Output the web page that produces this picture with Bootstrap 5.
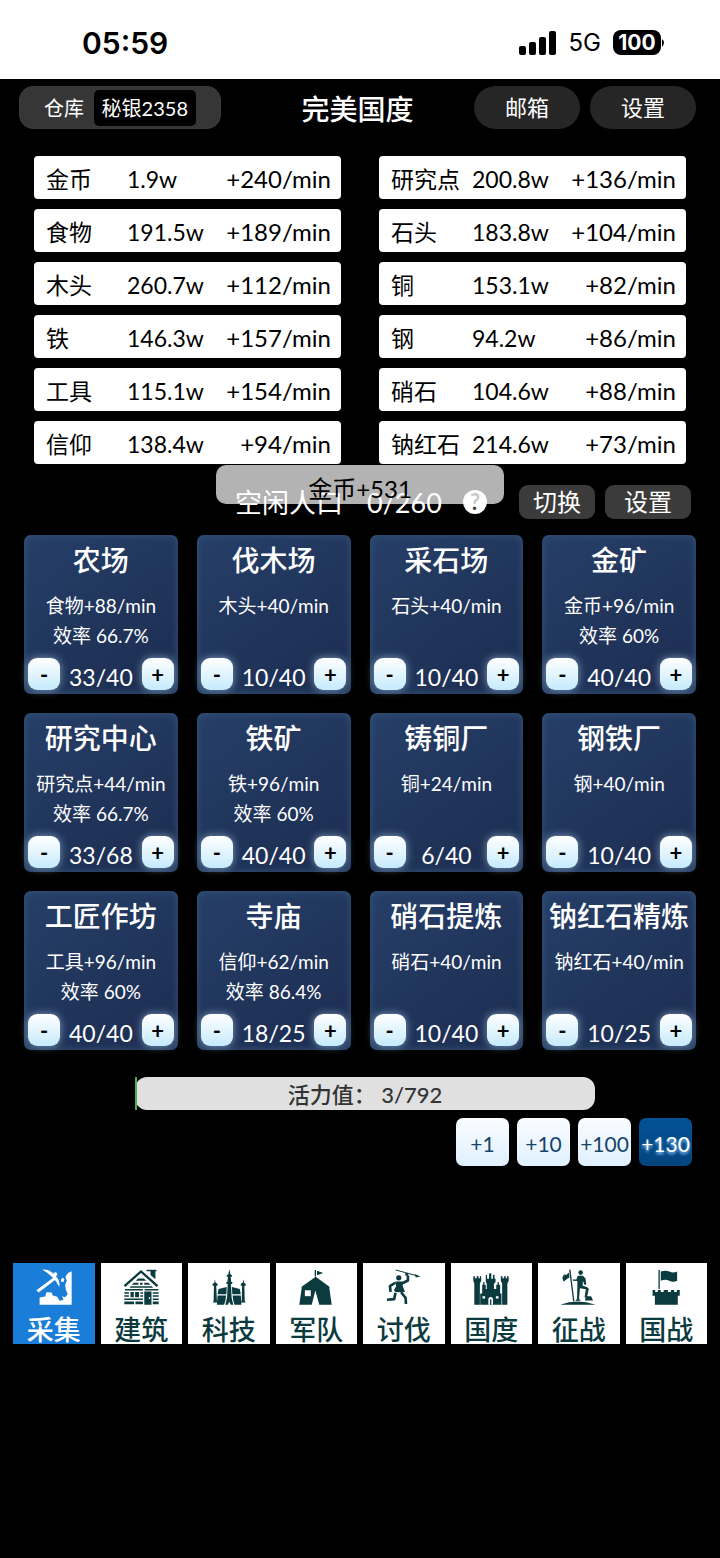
<!DOCTYPE html>
<html lang="zh-CN">
<head>
<meta charset="utf-8">
<meta name="viewport" content="width=device-width, initial-scale=1">
<title>完美国度</title>
<link href="https://cdn.jsdelivr.net/npm/bootstrap@5.3.0/dist/css/bootstrap.min.css" rel="stylesheet">
<style>
  body { background: #000; color: #fff; font-family: Lato, "Noto Sans CJK SC", sans-serif; font-size: 24px; line-height: 28px; }
  button { color: inherit; white-space: nowrap; }
  .status-bar { height: 79px; padding: 6px 54px 0 82px; font-family: Inter, sans-serif; }
  .clock { font-size: 30px; font-weight: 600; }
  .network { font-size: 24px; }
  .battery { background: #000; color: #fff; font-size: 21px; font-weight: 700; line-height: 25px; width: 48px; border-radius: 8px; text-align: center; }

  .top-bar { padding: 5px 24px 0 19px; display: grid; grid-template-columns: 1fr auto 1fr; align-items: center; }
  .store-pill { width: 202px; height: 43px; border: 1px solid #3c3c3c; border-radius: 14px; background: #363636; font-size: 20px; padding: 0 24px; }
  .store-pill span + span { background: #000; border-radius: 5px; line-height: 36px; padding: 0 8px; }
  .page-title { font-size: 28px; font-weight: 500; line-height: 43px; margin: 0; padding-top: 4px; }
  .round-pill { width: 106px; height: 43px; border: 0; border-radius: 22px; background: #262626; font-size: 22px; padding-top: 2px; }

  .resources { padding: 25px 34px 0; display: grid; grid-template-columns: 1fr 1fr; gap: 10px 38px; }
  .resource { background: #fff; color: #000; border-radius: 4px; height: 43px; padding: 3px 10px 0 12px; }
  .resource-name { width: 81px; font-size: 23px; }
  .resource-amount { font-size: 23px; }

  .idle-row { padding: 5px 29px 0 235px; height: 71px; }
  .idle-count { font-size: 27px; line-height: 50px; padding-top: 2px; }
  .help-btn { width: 24px; height: 24px; border: 0; border-radius: 12px; background: #fff; color: #444; font-size: 22px; font-weight: 700; line-height: 24px; padding: 0; }
  .dark-btn { height: 34px; border: 0; border-radius: 9px; background: #3b3b3b; font-size: 24px; line-height: 34px; padding: 0 14px; }
  .dark-btn.wide { padding: 0 19px; }
  .gain-toast { top: 1px; left: 30%; right: 30%; height: 39px; border-radius: 10px; background: rgba(255,255,255,.7); color: #000; line-height: 48px; text-align: center; }

  .buildings { padding: 0 24px; display: grid; grid-template-columns: repeat(4, 1fr); gap: 19px; }
  .building { height: 159px; border-radius: 7px; padding: 11px 4px 2px; background: linear-gradient(145deg, #263f68, #1c2c50); box-shadow: inset 0 0 8px #355679; text-align: center; white-space: nowrap; }
  .building h2 { font-size: 28px; font-weight: 500; line-height: 28px; margin: 0 -4px; }
  .building p { font-size: 19px; line-height: 30px; margin: 0; }
  .building h2 + p { margin-top: 17px; }
  .step-btn { width: 32px; height: 32px; border: 0; border-radius: 9px; background: linear-gradient(#fff, #c5eafc); box-shadow: 0 0 8px rgba(190,225,255,.6); color: #000; font-size: 22px; font-weight: 700; line-height: 34px; padding: 0; }
  .workers { font-size: 23px; line-height: 30px; padding-top: 4px; }

  .vigor { height: 33px; margin: 27px 125px 0 135px; border-radius: 12px; background: #e0e0e0; color: #333; font-weight: 500; font-size: 22px; line-height: 36px; overflow: visible; }
  .vigor-bar { background: #4caf50; }
  .steps { gap: 8px; padding: 8px 28px 0; }
  .amount-btn { width: 53px; height: 48px; border: 0; border-radius: 7px; background: linear-gradient(#fafcff, #e0f0ff); color: #164468; font-size: 21px; padding: 3px 0 0; }
  .amount-btn.chosen { background: linear-gradient(#035296, #04457e); color: #fff; text-shadow: 0 2px 3px #9cf; }

  .tabs { margin-top: 97px; padding: 0 13px; gap: 6px; }
  .tab { flex: 1 1 0; min-width: 0; height: 81px; border: 0; background: #fff; color: #0b3b3e; padding: 5px 0 0; font-size: 27px; font-weight: 500; line-height: 28px; }
  .tab svg { display: block; width: 36px; height: 36px; margin: 0 auto 11px; fill: currentColor; stroke: currentColor; stroke-width: 0; }
  .tab.current { background: #1a7dd7; color: #fff; }
</style>
<script src="https://cdn.jsdelivr.net/npm/bootstrap@5.3.0/dist/js/bootstrap.bundle.min.js"></script>
</head>
<body>
<div class="status-bar bg-white text-black d-flex align-items-center justify-content-between">
  <span class="clock">05:59</span>
  <div class="d-flex align-items-center">
    <svg class="me-2" width="38" height="26" viewBox="0 0 38 26" aria-hidden="true"><rect y="16" width="7" height="9" rx="2"/><rect x="10" y="12" width="7" height="13" rx="2"/><rect x="20" y="7" width="7" height="18" rx="2"/><rect x="30" y="1" width="7" height="24" rx="2"/></svg>
    <span class="network ms-1 me-2">5G</span>
    <span class="battery ms-1">100</span>
    <svg width="5" height="12" viewBox="0 0 5 12" aria-hidden="true"><path d="M1 2q4 3 0 8z"/></svg>
  </div>
</div>

<header class="top-bar">
  <button class="store-pill d-flex align-items-center justify-content-between"><span>仓库</span><span>秘银2358</span></button>
  <h1 class="page-title">完美国度</h1>
  <div class="d-flex justify-content-end" style="gap:10px"><button class="round-pill">邮箱</button><button class="round-pill">设置</button></div>
</header>

<main>
  <section class="resources">
    <div class="resource d-flex align-items-center"><span class="resource-name">金币</span><span class="resource-amount">1.9w</span><span class="ms-auto">+240/min</span></div>
    <div class="resource d-flex align-items-center"><span class="resource-name">研究点</span><span class="resource-amount">200.8w</span><span class="ms-auto">+136/min</span></div>
    <div class="resource d-flex align-items-center"><span class="resource-name">食物</span><span class="resource-amount">191.5w</span><span class="ms-auto">+189/min</span></div>
    <div class="resource d-flex align-items-center"><span class="resource-name">石头</span><span class="resource-amount">183.8w</span><span class="ms-auto">+104/min</span></div>
    <div class="resource d-flex align-items-center"><span class="resource-name">木头</span><span class="resource-amount">260.7w</span><span class="ms-auto">+112/min</span></div>
    <div class="resource d-flex align-items-center"><span class="resource-name">铜</span><span class="resource-amount">153.1w</span><span class="ms-auto">+82/min</span></div>
    <div class="resource d-flex align-items-center"><span class="resource-name">铁</span><span class="resource-amount">146.3w</span><span class="ms-auto">+157/min</span></div>
    <div class="resource d-flex align-items-center"><span class="resource-name">钢</span><span class="resource-amount">94.2w</span><span class="ms-auto">+86/min</span></div>
    <div class="resource d-flex align-items-center"><span class="resource-name">工具</span><span class="resource-amount">115.1w</span><span class="ms-auto">+154/min</span></div>
    <div class="resource d-flex align-items-center"><span class="resource-name">硝石</span><span class="resource-amount">104.6w</span><span class="ms-auto">+88/min</span></div>
    <div class="resource d-flex align-items-center"><span class="resource-name">信仰</span><span class="resource-amount">138.4w</span><span class="ms-auto">+94/min</span></div>
    <div class="resource d-flex align-items-center"><span class="resource-name">钠红石</span><span class="resource-amount">214.6w</span><span class="ms-auto">+73/min</span></div>
  </section>

  <section class="idle-row position-relative d-flex align-items-center">
    <span class="idle-count">空闲人口</span>
    <span class="idle-count ms-4">0/260</span>
    <button class="help-btn ms-auto me-4">?</button>
    <div class="d-flex ms-2" style="gap:10px"><button class="dark-btn">切换</button><button class="dark-btn wide">设置</button></div>
    <div class="gain-toast position-absolute" role="status">金币+531</div>
  </section>

  <section class="buildings">
    <article class="building d-flex flex-column"><h2>农场</h2><p>食物+88/min</p><p>效率 66.7%</p><div class="d-flex justify-content-between mt-auto"><button class="step-btn">-</button><span class="workers">33/40</span><button class="step-btn">+</button></div></article>
    <article class="building d-flex flex-column"><h2>伐木场</h2><p>木头+40/min</p><div class="d-flex justify-content-between mt-auto"><button class="step-btn">-</button><span class="workers">10/40</span><button class="step-btn">+</button></div></article>
    <article class="building d-flex flex-column"><h2>采石场</h2><p>石头+40/min</p><div class="d-flex justify-content-between mt-auto"><button class="step-btn">-</button><span class="workers">10/40</span><button class="step-btn">+</button></div></article>
    <article class="building d-flex flex-column"><h2>金矿</h2><p>金币+96/min</p><p>效率 60%</p><div class="d-flex justify-content-between mt-auto"><button class="step-btn">-</button><span class="workers">40/40</span><button class="step-btn">+</button></div></article>
    <article class="building d-flex flex-column"><h2>研究中心</h2><p>研究点+44/min</p><p>效率 66.7%</p><div class="d-flex justify-content-between mt-auto"><button class="step-btn">-</button><span class="workers">33/68</span><button class="step-btn">+</button></div></article>
    <article class="building d-flex flex-column"><h2>铁矿</h2><p>铁+96/min</p><p>效率 60%</p><div class="d-flex justify-content-between mt-auto"><button class="step-btn">-</button><span class="workers">40/40</span><button class="step-btn">+</button></div></article>
    <article class="building d-flex flex-column"><h2>铸铜厂</h2><p>铜+24/min</p><div class="d-flex justify-content-between mt-auto"><button class="step-btn">-</button><span class="workers">6/40</span><button class="step-btn">+</button></div></article>
    <article class="building d-flex flex-column"><h2>钢铁厂</h2><p>钢+40/min</p><div class="d-flex justify-content-between mt-auto"><button class="step-btn">-</button><span class="workers">10/40</span><button class="step-btn">+</button></div></article>
    <article class="building d-flex flex-column"><h2>工匠作坊</h2><p>工具+96/min</p><p>效率 60%</p><div class="d-flex justify-content-between mt-auto"><button class="step-btn">-</button><span class="workers">40/40</span><button class="step-btn">+</button></div></article>
    <article class="building d-flex flex-column"><h2>寺庙</h2><p>信仰+62/min</p><p>效率 86.4%</p><div class="d-flex justify-content-between mt-auto"><button class="step-btn">-</button><span class="workers">18/25</span><button class="step-btn">+</button></div></article>
    <article class="building d-flex flex-column"><h2>硝石提炼</h2><p>硝石+40/min</p><div class="d-flex justify-content-between mt-auto"><button class="step-btn">-</button><span class="workers">10/40</span><button class="step-btn">+</button></div></article>
    <article class="building d-flex flex-column"><h2>钠红石精炼</h2><p>钠红石+40/min</p><div class="d-flex justify-content-between mt-auto"><button class="step-btn">-</button><span class="workers">10/25</span><button class="step-btn">+</button></div></article>
  </section>

  <div class="vigor progress position-relative" role="progressbar" aria-label="活力值" aria-valuenow="3" aria-valuemin="0" aria-valuemax="792">
    <div class="vigor-bar" style="width:0.38%"></div>
    <div class="position-absolute w-100 text-center">活力值： 3/792</div>
  </div>
  <div class="steps d-flex justify-content-end">
    <button class="amount-btn">+1</button><button class="amount-btn">+10</button><button class="amount-btn">+100</button><button class="amount-btn chosen">+130</button>
  </div>
</main>

<nav class="tabs d-flex">
  <button class="tab current"><svg viewBox="92 38 110 110" aria-hidden="true"><path d="M111 40Q134 38 148 55L158 66Q166 78 163 92Q153 73 142 63Q128 49 111 40zM151 60l6 6-57 44-7-7zM201 45v102h-98v-22l17-3 4-13 16 1 3 9 14 4 7 12 12-2-4-12 9 3 8-9-6-14-2-14 5-13-4-12 8-12z"/><circle cx="151" cy="54" r="6"/><path d="M168 70l6-5 5 4-3 9-7-1z"/></svg>采集</button>
  <button class="tab"><svg viewBox="354 38 110 110" aria-hidden="true"><path d="M409 41l53 47-5 5-48-43-48 43-5-5zM426 40h30v5h-3v24l-15-13v-11h-12zM400 67h18l7 7h-32zM387 80h14v6h-20zM406 80h8v6h-8zM419 80h12l7 6h-19zM378 91h64l4 4h-72zM360 99h55v5h-55zM420 99h42v5h-42zM358 109h14v5h-14zM358 118h14v5h-14zM377 108h10v16h-10zM391 108h12v16h-12zM407 109h8v5h-8zM407 118h8v5h-8zM445 109h18v5h-18zM445 118h18v5h-18zM358 128h57v5h-57zM445 128h18v5h-18zM358 137h30v9h-30zM392 137h23v9h-23zM445 137h18v9h-18z"/><path fill-rule="evenodd" d="M419 107h22v40h-22zm14 17v6h4v-6z"/></svg>建筑</button>
  <button class="tab"><svg viewBox="92 38 110 110" aria-hidden="true"><path d="M145 54l3-16 3 16 5 3v5h-4l2 16h3v6h-4l2 42 5 21h-8q-4-17-8 0h-8l5-21 2-42h-4v-6h3l2-16h-4v-5zM102 80l2-11 2 11 6 3v6h-4l2 46 3 5h-15l2-5 1-46h-4v-6zM189 80l2-11 2 11 5 3v6h-4l1 46 3 5h-15l3-5 1-46h-4v-6zM115 99l25-6-1 22h-27zM156 93l24 6 3 16h-26zM112 119h26l-2 16-4 12h-22zM158 119h25l2 28h-21l-4-12z"/></svg>科技</button>
  <button class="tab"><svg viewBox="354 38 110 110" aria-hidden="true"><path d="M405 41h4v20h-4zM412 43l19 7-19 7zM408 62l42 30v6l7 49h-38l-12-43-11 43h-38l7-49v-6z"/><path fill="#fff" d="M375 103h18v18h-18z"/></svg>军队</button>
  <button class="tab"><svg viewBox="92 38 110 110" aria-hidden="true"><circle cx="131" cy="65" r="8"/><path fill="none" stroke-width="3" d="M122 41l62 17"/><path d="M180 53l17 8-14 3z"/><path d="M151 50h9v9h-9zM120 76h22l1 14 7 18-28 1-6-6 7-12z"/><path fill="none" stroke-width="8" stroke-linejoin="round" d="M159 58v15l-20 10M120 80l-16 10 2 18M121 111l-4 19-22 2M138 109l14 17 1 19"/></svg>讨伐</button>
  <button class="tab"><svg viewBox="354 38 110 110" aria-hidden="true"><path d="M355 60h5v6h5v-6h6v6h4v-6h4v15l-4 7v65h-17V82l-3-7zM439 60h5v6h5v-6h5v6h4v-6h5v15l-4 7v65h-16V82l-4-7zM393 56h4v12h6V53h-2l9-3v18h5V56h5v12h3v10l-5 5v16h-22V83l-3-5zM382 86h3v-8h4v8h4v13h32V86h4v-8h4v8h4v27h4v34h-65v-34h6z"/><path fill="#fff" d="M401 147v-19q7-9 14 0v19zM383 121h8v7h-8zM424 121h8v7h-8z"/><path d="M406 131h4v16h-4z"/></svg>国度</button>
  <button class="tab"><svg viewBox="92 38 110 110" aria-hidden="true"><circle cx="152" cy="49" r="7"/><path fill="none" stroke-width="4" d="M119 40l12 97"/><path d="M96 65l5-10 7 1 8-7 2 15-7 4-11 9zM143 59h16l8 8 2 18-5 2-5-13-1 15 13 4 6 5-5 23h7v4h-15l4-25-18-3-3 33 6 5h-17l5-6 1-36v-18l-14-1v-4h11zM167 126l5-5h12l6 13h-25zM91 147q48-20 107 0z"/></svg>征战</button>
  <button class="tab"><svg viewBox="350 38 110 110" aria-hidden="true"><path d="M382 41h4v58h-4zM389 46q14-6 26 0t24 0v28q-12 6-24 0t-26 0zM364 102h8v6h8v-6h9v6h9v-6h13v6h9v-6h10v6h8v-6h9v18h-6v27h-70v-27h-7z"/></svg>国战</button>
</nav>
</body>
</html>
